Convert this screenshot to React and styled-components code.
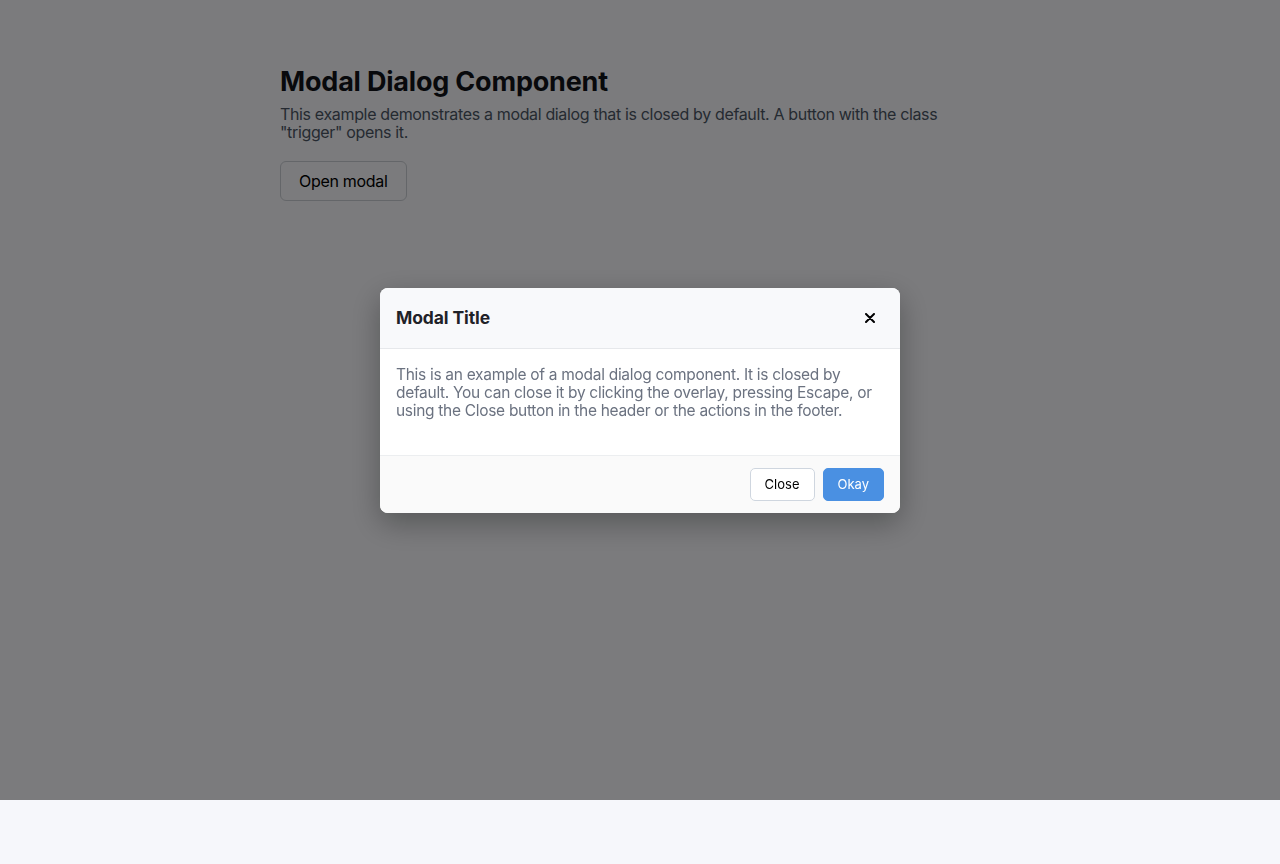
import React from "react"
import styled, { createGlobalStyle } from "styled-components"

const GlobalStyle = createGlobalStyle`
  html, body {
    margin: 0;
    padding: 0;
    background: #f6f7fb;
    font-family: Inter, "Noto Sans", "Liberation Sans", sans-serif;
    color: #111318;
  }
  * { box-sizing: border-box; }
`

const Page = styled.main`
  width: 720px;
  margin: 0 auto;
  padding: 65px 0 0;
`

const Heading = styled.h1`
  margin: 0 0 6px;
  font-size: 27px;
  line-height: 34px;
  font-weight: 700;
  letter-spacing: -0.2px;
  color: #111318;
`

const Intro = styled.p`
  margin: 0 0 20px;
  font-size: 16px;
  line-height: 18px;
  letter-spacing: -0.35px;
  color: #4b5563;
`

const Trigger = styled.button`
  height: 40px;
  padding: 0 18px;
  border: 1px solid #c9ccd2;
  border-radius: 6px;
  background: #f6f7fb;
  font-family: inherit;
  font-size: 16px;
  letter-spacing: -0.3px;
  color: #000;
`

const Overlay = styled.div`
  position: fixed;
  left: 0;
  top: 0;
  width: 100%;
  height: 800px;
  background: rgba(0, 0, 0, 0.5);
  display: flex;
  align-items: center;
  justify-content: center;
`

const Dialog = styled.div`
  width: 520px;
  background: #fff;
  border-radius: 8px;
  overflow: hidden;
  box-shadow: 0 10px 30px rgba(0, 0, 0, 0.3);
`

const Header = styled.div`
  height: 61px;
  display: flex;
  align-items: center;
  justify-content: space-between;
  padding: 0 16px;
  background: #f8f9fb;
  border-bottom: 1px solid #e6e8eb;
`

const Title = styled.h2`
  margin: 0;
  font-size: 17.5px;
  font-weight: 700;
  letter-spacing: -0.1px;
  color: #1f2228;
`

const CloseIcon = styled.button`
  width: 28px;
  height: 28px;
  border: 0;
  background: transparent;
  display: flex;
  align-items: center;
  justify-content: center;
  padding: 0;
  color: #000;
`

const Body = styled.div`
  padding: 17px 16px 35px;
  font-size: 15.5px;
  line-height: 18px;
  letter-spacing: -0.3px;
  color: #6b7280;
  border-bottom: 1px solid #eceef0;
`

const Footer = styled.div`
  display: flex;
  justify-content: flex-end;
  gap: 8px;
  padding: 12px 16px;
  background: #fafafa;
`

const ActionButton = styled.button`
  height: 33px;
  padding: 0 14px;
  border-radius: 5px;
  font-family: inherit;
  font-size: 13px;
  border: 1px solid ${p => (p.$primary ? "#4a90e2" : "#cfd6df")};
  background: ${p => (p.$primary ? "#4a90e2" : "#fff")};
  color: ${p => (p.$primary ? "#fff" : "#000")};
`

export default function App() {
  return (
    <>
      <GlobalStyle />
      <Page>
        <Heading>Modal Dialog Component</Heading>
        <Intro>
          This example demonstrates a modal dialog that is closed by default. A button with the class
          "trigger" opens it.
        </Intro>
        <Trigger className="trigger">Open modal</Trigger>
      </Page>
      <Overlay>
        <Dialog role="dialog" aria-modal="true">
          <Header>
            <Title>Modal Title</Title>
            <CloseIcon aria-label="Close">
              <svg width="10" height="10" viewBox="0 0 10 10">
                <path d="M1 1L9 9M9 1L1 9" stroke="#000" strokeWidth="2" strokeLinecap="round" />
              </svg>
            </CloseIcon>
          </Header>
          <Body>
            This is an example of a modal dialog component. It is closed by default. You can close it
            by clicking the overlay, pressing Escape, or using the Close button in the header or the
            actions in the footer.
          </Body>
          <Footer>
            <ActionButton>Close</ActionButton>
            <ActionButton $primary>Okay</ActionButton>
          </Footer>
        </Dialog>
      </Overlay>
    </>
  )
}
